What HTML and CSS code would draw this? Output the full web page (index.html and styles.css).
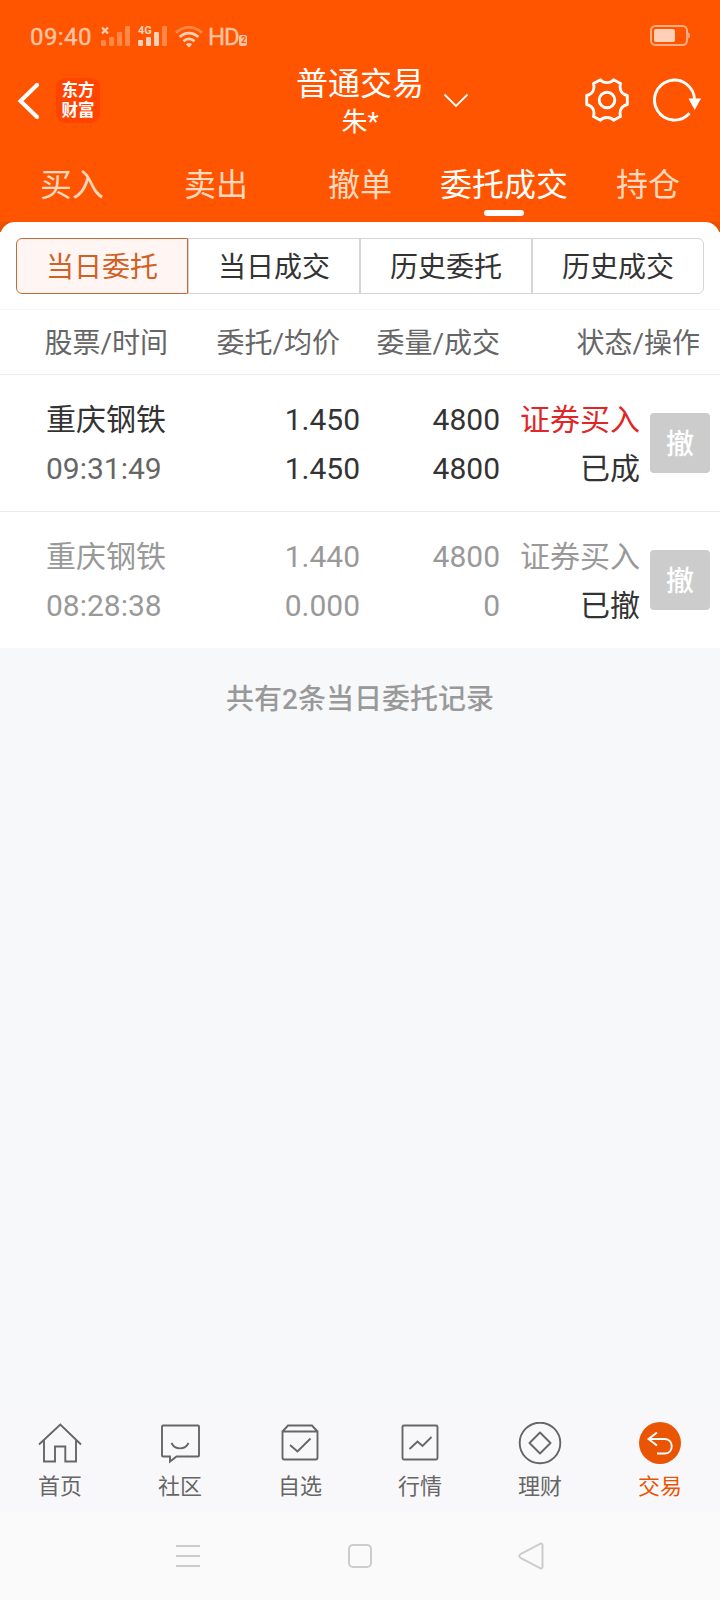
FILE: index.html
```html
<!DOCTYPE html>
<html lang="zh-CN">
<head>
<meta charset="utf-8">
<title>普通交易</title>
<link rel="stylesheet" href="styles.css">
</head>
<body>
<div class="app">
  <header class="top">
    <div class="status">
      <div class="status-left">
        <span class="clock">09:40</span>
        <svg class="signals" width="68" height="26" viewBox="0 -4 68 26">
          <g fill="#ff8847">
            <rect x="1" y="14" width="5" height="6" rx="1"/><rect x="9" y="11" width="5" height="9" rx="1"/><rect x="17" y="6" width="5" height="14" rx="1"/><rect x="25" y="0" width="5" height="20" rx="1"/>
            <rect x="62" y="0" width="5" height="20" rx="1"/>
          </g>
          <g fill="#ffd0b8">
            <rect x="38" y="14" width="5" height="6" rx="1"/><rect x="46" y="11" width="5" height="9" rx="1"/><rect x="54" y="6" width="5" height="14" rx="1"/>
            <text class="net" x="38" y="8">4G</text>
          </g>
          <path d="M2 1.500l6 6M8 1.500l-6 6" stroke="#ffd0b8" stroke-width="2.200"/>
        </svg>
        <svg class="wifi" width="28" height="22" viewBox="0 0 28 22" fill="none" stroke="#ffd0b8" stroke-width="2.800">
          <path d="M1 6.800C8.500-.4 19.500-.4 27 6.800" stroke="#ff8847"/>
          <path d="M4.700 11c5.400-5.200 13.200-5.200 18.600 0"/>
          <path d="M8.500 15.200c3.200-3 7.800-3 11 0"/>
          <path d="M14 21.500l-3.200-3.300c1.800-1.500 4.600-1.500 6.400 0z" fill="#ffd0b8" stroke="none"/>
        </svg>
        <span class="hd">HD</span>
        <span class="sim">2</span>
      </div>
      <svg class="battery" width="40" height="22" viewBox="0 0 40 22">
        <rect x="1" y="1" width="36" height="19" rx="4.500" fill="none" stroke="#ffad82" stroke-width="2"/>
        <rect x="4" y="4" width="21" height="13" rx="2" fill="#ffd0b8"/>
        <path d="M37.500 7.500q2.500 0 2.500 3t-2.500 3z" fill="#ffad82"/>
      </svg>
    </div>
    <div class="titlebar">
      <div class="title-left">
        <svg class="back" width="22" height="36" viewBox="0 0 22 36" fill="none" stroke="#fff" stroke-width="4" stroke-linecap="round"><path d="M20 2L3.500 18 20 34"/></svg>
        <div class="brand"><span>东方</span><span>财富</span></div>
      </div>
      <div class="title">
        <div class="title-main">普通交易</div>
        <div class="title-sub">朱*</div>
      </div>
      <svg class="chevron" width="26" height="15" viewBox="0 0 26 15" fill="none" stroke="#fff" stroke-width="1.800"><path d="M1.500 1.500L13 13 24.500 1.500"/></svg>
      <div class="title-right">
        <svg width="44" height="44" viewBox="0 0 44 44" fill="none" stroke="#fff" stroke-width="2.900" stroke-linejoin="round">
          <circle cx="22" cy="22" r="7.800"/>
          <path d="M15.500 1.800C18.500 5.500 25.500 5.500 28.500 1.800L35.500 5.500C34 11.500 36.500 16 42.300 17.500V26.500C36.500 28 34 32.500 35.500 38.500L28.500 42.200C25.500 38.500 18.500 38.500 15.500 42.200L8.500 38.500C10 32.500 7.500 28 1.700 26.500V17.500C7.500 16 10 11.500 8.500 5.500Z"/>
        </svg>
        <svg width="48" height="44" viewBox="0 0 48 44" fill="none" stroke="#fff" stroke-width="2.900">
          <path d="M41.500 22A20 20 0 1 0 36.500 35.300"/>
          <path d="M35.500 20.500H48L41.700 32z" fill="#fff" stroke="none"/>
        </svg>
      </div>
    </div>
    <nav class="tabs">
      <span>买入</span><span>卖出</span><span>撤单</span><span class="on">委托成交</span><span>持仓</span>
    </nav>
  </header>

  <main class="sheet-wrap">
    <section class="sheet">
      <div class="segments">
        <span class="seg active">当日委托</span><span class="seg">当日成交</span><span class="seg">历史委托</span><span class="seg">历史成交</span>
      </div>
      <div class="grid head">
        <span class="col-name">股票/时间</span><span>委托/均价</span><span>委量/成交</span><span>状态/操作</span>
      </div>
      <div class="grid row">
        <div class="cell name"><span>重庆钢铁</span><span class="time">09:31:49</span></div>
        <div class="cell"><span>1.450</span><span>1.450</span></div>
        <div class="cell"><span>4800</span><span>4800</span></div>
        <div class="cell"><span class="buy">证券买入</span><span>已成</span></div>
        <span class="cancel">撤</span>
      </div>
      <div class="grid row done">
        <div class="cell name"><span>重庆钢铁</span><span>08:28:38</span></div>
        <div class="cell"><span>1.440</span><span>0.000</span></div>
        <div class="cell"><span>4800</span><span>0</span></div>
        <div class="cell"><span>证券买入</span><span class="state">已撤</span></div>
        <span class="cancel">撤</span>
      </div>
    </section>
    <p class="summary">共有2条当日委托记录</p>
  </main>

  <nav class="bottom">
    <div class="item">
      <svg width="44" height="44" viewBox="0 0 44 44"><path d="M1 22.500L22.300 2.500 43 22.500M6 18.500V39.500h11V24.500h10.300v15H38V18.500"/></svg>
      <span>首页</span>
    </div>
    <div class="item">
      <svg width="44" height="44" viewBox="0 0 44 44"><path d="M5 3.500h35q1 0 1 1v29q0 1-1 1H18.500l-6.500 5V34.500H5q-1 0-1-1v-29q0-1 1-1z"/><path d="M13.500 21c3.500 7.200 13.500 7.200 17 0"/></svg>
      <span>社区</span>
    </div>
    <div class="item">
      <svg width="44" height="44" viewBox="0 0 44 44"><path d="M4.500 9.500v26q0 2 2 2h31q2 0 2-2v-26zM4.500 9.500l5.500-6h24l5.500 6"/><path d="M12 23l7.500 6.500 13-13"/></svg>
      <span>自选</span>
    </div>
    <div class="item">
      <svg width="44" height="44" viewBox="0 0 44 44"><rect x="4.500" y="3.500" width="35" height="34" rx="1.500"/><path d="M11.500 27l8-7.500 5 4.500L33.500 15"/></svg>
      <span>行情</span>
    </div>
    <div class="item">
      <svg width="44" height="44" viewBox="0 0 44 44"><circle cx="22" cy="21" r="20.300"/><path d="M22 10.500L32.500 21 22 31.500 11.500 21z" stroke-linejoin="round"/></svg>
      <span>理财</span>
    </div>
    <div class="item current">
      <svg width="44" height="44" viewBox="0 0 44 44"><circle cx="22" cy="21" r="21" fill="#ea5504" stroke="none"/><path d="M19 10.500l-8.500 6.500 8.500 6.500M11 17H27c9 0 9 14.500 0 14.500h-8"/></svg>
      <span>交易</span>
    </div>
  </nav>

  <div class="sysnav">
    <svg width="26" height="26" viewBox="0 0 26 26"><path d="M1 3h24M1 13h24M1 23h24"/></svg>
    <svg width="26" height="26" viewBox="0 0 26 26"><rect x="2" y="2" width="22" height="22" rx="4"/></svg>
    <svg width="26" height="28" viewBox="0 0 26 28"><path d="M2.500 12.200L22 1.800q2.500-.8 2.500 1.700v21q0 2.500-2.500 1.700L2.500 15.800q-2.500-1.800 0-3.600z"/></svg>
  </div>
</div>
</body>
</html>
```
FILE: styles.css
```css
* { box-sizing: border-box; }

body {
  margin: 0;
  background: #f7f8fa;
  font-family: Roboto, "Noto Sans CJK SC", sans-serif;
  color: #333;
}

svg { display: block; flex: none; }

.app {
  width: 720px;
  height: 1600px;
  display: flex;
  flex-direction: column;
}

/* Orange header */
.top {
  height: 222px;
  background: #ff5500;
  color: #fff;
}

.status {
  height: 72px;
  padding: 0 30px;
  display: flex;
  align-items: center;
  justify-content: space-between;
  color: #ffc4a3;
}

.status-left { display: flex; align-items: center; font-size: 24px; line-height: 28px; padding-top: 1px; }
.clock { width: 70px; letter-spacing: 0.4px; -webkit-text-stroke: 0.4px; }
.signals { margin-top: -4px; }
.net { font-size: 11px; font-weight: 700; }
.wifi { margin-left: 7px; }
.hd { margin-left: 5px; letter-spacing: -1.2px; -webkit-text-stroke: 0.3px; }
.sim {
  width: 8px;
  height: 11px;
  margin: 7px 0 0 1px;
  border-radius: 2px;
  background: #ffc4a3;
  color: #ff5500;
  font-size: 9px;
  font-weight: 700;
  line-height: 11px;
  text-align: center;
}

.titlebar {
  height: 76px;
  padding: 0 20px 0 17px;
  display: grid;
  grid-template-columns: 272px 142px 18px 26px 1fr;
  grid-template-rows: 58px;
  align-items: center;
}

.title-left { display: flex; align-items: center; gap: 17px; margin-top: -1px; }
.brand {
  width: 44px;
  height: 45px;
  padding-top: 3px;
  border-radius: 9px;
  background: #ff4400;
  font-size: 16.500px;
  font-weight: 700;
  line-height: 19.500px;
  text-align: center;
}
.brand span { display: block; }

.title { text-align: center; margin-top: 1px; }
.title-main { font-size: 32px; line-height: 40px; margin: 0 -8px; white-space: nowrap; }
.title-sub { font-size: 26px; line-height: 36px; }
.chevron { grid-column: 4; margin: -2px 0 0 -6px; }
.title-right { display: flex; justify-content: flex-end; gap: 24px; margin: -2px -1px 0 0; }

.tabs {
  height: 74px;
  display: grid;
  grid-template-columns: repeat(5, 144px);
  color: #ffd9bf;
  font-size: 32px;
  line-height: 74px;
  text-align: center;
}
.tabs .on { color: #fff; }
.tabs .on::after {
  content: "";
  display: block;
  width: 40px;
  height: 6px;
  margin: -12px auto 0;
  border-radius: 3px;
  background: #fff;
}

/* Order list */
.sheet-wrap {
  flex: 1;
  background: linear-gradient(#e65300 10px, #f7f8fa 10px);
}
.sheet {
  padding-top: 16px;
  border-radius: 15px 15px 0 0;
  background: #fff;
}

.segments {
  height: 56px;
  margin: 0 16px 15px;
  display: grid;
  grid-template-columns: repeat(4, 1fr);
}
.seg {
  padding-top: 4px;
  border: 1px solid #d3d5d6;
  font-size: 28px;
  line-height: 50px;
  text-align: center;
}
.seg:last-child { border-radius: 0 6px 6px 0; }
.seg.active {
  border-color: #c66b38;
  border-radius: 6px 0 0 6px;
  background: #fff6f3;
  color: #d06023;
}

.grid {
  display: grid;
  grid-template-columns: 168px 172px 160px 200px;
  text-align: right;
}
.head {
  height: 66px;
  border-top: 1px solid #f5f5f5;
  border-bottom: 1px solid #ebebeb;
  color: #666;
  font-size: 28px;
  line-height: 67px;
}
.row {
  grid-template-columns: 190px 170px 140px 140px 60px;
  height: 137px;
  padding-top: 20px;
  border-bottom: 1px solid #ebebeb;
  font-size: 30px;
  line-height: 49px;
}
.cell span { display: block; }
.name { padding-left: 46px; text-align: left; }
.time { color: #666; }
.buy { color: #e02626; }
.done { height: 136px; border-bottom: 0; color: #999; }
.state { color: #333; }
.cancel {
  width: 60px;
  height: 60px;
  margin: 18px 0 0 10px;
  border-radius: 4px;
  background: #ccc;
  color: #fff;
  font-size: 28px;
  font-weight: 500;
  line-height: 63px;
  text-align: center;
}

.summary {
  margin: 31px 0 0;
  color: #999;
  font-size: 28px;
  font-weight: 500;
  line-height: 42px;
  text-align: center;
}

/* Bottom navigation */
.bottom {
  height: 100px;
  display: grid;
  grid-template-columns: repeat(6, 120px);
  background: #f8f8fa;
  color: #666;
  font-size: 22px;
  line-height: 34px;
}
.item {
  display: flex;
  flex-direction: column;
  align-items: center;
  padding-top: 10px;
}
.item svg { margin-bottom: 4px; fill: none; stroke: #666; stroke-width: 1.900; }
.current { color: #ea5504; }
.current svg { stroke: #fff; }

.sysnav {
  height: 88px;
  display: grid;
  grid-template-columns: 172px 172px 170px;
  padding-left: 102px;
  align-items: center;
  justify-items: center;
  background: #fafafa;
}
.sysnav svg { fill: none; stroke: #ccc; stroke-width: 2; }
```
